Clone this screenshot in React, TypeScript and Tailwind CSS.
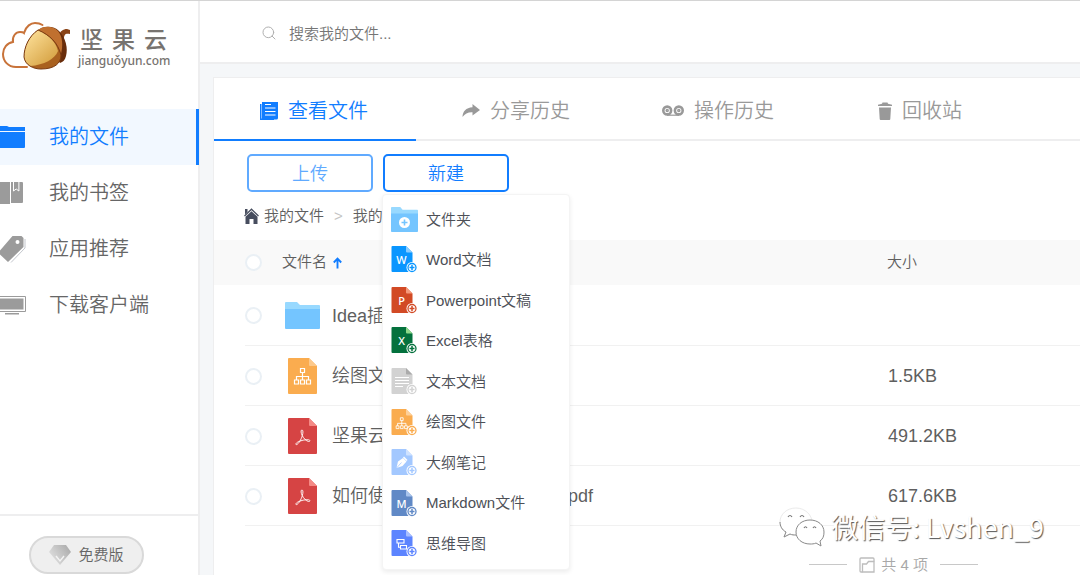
import type { ReactNode } from "react";
import { Search } from "lucide-react";

type IconProps = { className?: string };

function AcornLogo() {
  return (
    <svg className="h-12 w-[70px] shrink-0" viewBox="0 0 70 48" fill="none">
      <defs>
        <linearGradient id="nut" x1="26" y1="14" x2="52" y2="42" gradientUnits="userSpaceOnUse">
          <stop offset="0" stopColor="#fbdd95" />
          <stop offset="1" stopColor="#d6a243" />
        </linearGradient>
      </defs>
      <path
        d="M27 45H16C8 45 3 39 3 32c0-6 4-11 10-12-1-6 3-10 7-10 1 0 3 0 4 1C26 4 31 1 35 1c3 0 6 1 7.500 2"
        stroke="#c8733a"
        strokeWidth="2"
        strokeLinecap="round"
      />
      <path d="M59 14c1-5 4-7 8-7l3 1v4c-5-1-6 1-6 5z" fill="#8a4316" />
      <path d="M37 9c5-5 16-6 22 0 7 7 9 17 7 25-1 4-3 6-6 7z" fill="#692d0b" />
      <path d="M37 9c5-5 15-6 21 0 5 6 5 15 3 23C57 22 48 13 37 9z" fill="#c0702f" />
      <path d="M38 8c12 5 20 13 23 25 0 8-6 14-20 14-8 0-16-4-17-12 0-10 5-21 14-27z" fill="#a9611f" />
      <path d="M38 8c11 5 18 12 20 21-3 8-14 14-28 15-3-2-6-5-6-9 0-10 5-21 14-27z" fill="url(#nut)" />
      <path
        d="M38 8c12 5 20 13 23 25 0 8-6 14-20 14-8 0-16-4-17-12 0-10 5-21 14-27z"
        stroke="#7a3a12"
        strokeWidth="1"
      />
    </svg>
  );
}

function FolderNavIcon() {
  return (
    <svg className="h-6 w-[26px]" viewBox="0 0 26 24" fill="currentColor">
      <path d="M0 1h7l2 1h16v4H0zM0 7h25v15a1 1 0 0 1-1 1H0z" />
    </svg>
  );
}

function BookNavIcon() {
  return (
    <svg className="h-6 w-[26px]" viewBox="0 0 26 24" fill="currentColor">
      <path d="M0 1h10v22H0zM11 1h11a1 1 0 0 1 1 1v19a1 1 0 0 1-1 1H11z" />
      <path d="M13.500 1v9l2.700-2 2.700 2V1" fill="none" stroke="#fff" strokeWidth="1" />
    </svg>
  );
}

function TagNavIcon() {
  return (
    <svg className="h-7 w-[26px]" viewBox="0 0 26 28" fill="currentColor">
      <path
        fillRule="evenodd"
        d="M0 15.500 12.500 1h9L23.500 3v9L8 27l-8-7.500zM17.500 5a2 2 0 1 0 0 4 2 2 0 0 0 0-4z"
      />
      <path d="M25 4v9L11 27.500" fill="none" stroke="#c3c6cc" strokeWidth="1" />
    </svg>
  );
}

function MonitorNavIcon() {
  return (
    <svg className="h-5 w-[26px]" viewBox="0 0 26 20">
      <path d="M-1 1.500h26.500v15H-1z" fill="none" stroke="#9b9b9b" />
      <path d="M0 3.500h23.500v11H0zM5 18h14v1.500H5z" fill="#9b9b9b" />
    </svg>
  );
}

function ListTabIcon() {
  return (
    <svg className="h-[18px] w-[18px]" viewBox="0 0 18 18" fill="currentColor">
      <path d="M0 2h1.500v14.500H14V18H0z" />
      <path d="M2 0h16v16a1.500 1.500 0 0 1-1.500 1.500H2z" />
      <path d="M5 2.500h6M5 6h10.500M5 9.500h10.500M5 13h10.500" stroke="#fff" strokeWidth="1" />
    </svg>
  );
}

function ShareTabIcon() {
  return (
    <svg className="h-[18px] w-[18px]" viewBox="0 0 18 18" fill="currentColor">
      <path d="M10.500 2 18 8l-7.500 5.500v-3.300C6 10 3 11.500.5 15 .7 9.500 4 5.800 10.500 5.300z" />
    </svg>
  );
}

function TapeTabIcon() {
  return (
    <svg className="h-[18px] w-[22px]" viewBox="0 0 22 18" fill="none" stroke="currentColor">
      <circle cx="5.200" cy="8.500" r="3.900" strokeWidth="2.600" />
      <circle cx="16.800" cy="8.500" r="3.900" strokeWidth="2.600" />
      <circle cx="5.200" cy="8.500" r="1" strokeWidth="1.500" />
      <circle cx="16.800" cy="8.500" r="1" strokeWidth="1.500" />
      <path d="M5 13.200h12" strokeWidth="1.200" />
    </svg>
  );
}

function TrashTabIcon() {
  return (
    <svg className="h-[18px] w-[14px]" viewBox="0 0 14 18" fill="currentColor">
      <path d="M4.500.5h5l.5 1.300 4 1V4H0V2.800l4-1zM1 5.500h12L12.300 17a1 1 0 0 1-1 1H2.700a1 1 0 0 1-1-1z" />
    </svg>
  );
}

function HomeIcon() {
  return (
    <svg className="h-4 w-[15px]" viewBox="0 0 15 16" fill="#474d5e">
      <path d="M1 1h2.500v3L1 6.500z" />
      <path d="M.5 8 7.500 1.200 14.500 8" fill="none" stroke="#474d5e" strokeWidth="1.200" />
      <path d="m7.500 3.200 6 5.600V16H9.500v-5h-4v5h-4V8.800z" />
    </svg>
  );
}

function DiamondIcon() {
  return (
    <svg className="h-5 w-[22px]" viewBox="0 0 22 20">
      <defs>
        <linearGradient id="gem" x1="2" y1="14" x2="19" y2="3" gradientUnits="userSpaceOnUse">
          <stop offset="0" stopColor="#dedede" />
          <stop offset="1" stopColor="#b0b0b0" />
        </linearGradient>
      </defs>
      <path d="M5 0h12l5 7-11 13L0 7z" fill="url(#gem)" />
      <path d="m7 11 4 5 4-5" fill="none" stroke="#f4f4f4" strokeWidth="1.400" />
    </svg>
  );
}

function FolderIcon({ className }: IconProps) {
  return (
    <svg className={className} viewBox="0 0 35 27" preserveAspectRatio="none">
      <path d="M0 1a1 1 0 0 1 1-1h11l3 3h19a1 1 0 0 1 1 1v8H0z" fill="#98d9ff" />
      <path d="M0 7h35v19a1 1 0 0 1-1 1H1a1 1 0 0 1-1-1z" fill="#74c5ff" />
    </svg>
  );
}

function OrgChart() {
  return (
    <g fill="none" stroke="#fff" strokeWidth="1.200">
      <path d="M12.500 10.500h4v4h-4zM14.500 14.500v4M8.500 22v-3.500h12V22M14.500 18v4" />
      <path d="M6.500 22h4v4h-4zM12.500 22h4v4h-4zM18.500 22h4v4h-4z" />
    </g>
  );
}

function DiagramFileIcon() {
  return (
    <svg className="h-9 w-[29px]" viewBox="0 0 29 36">
      <path d="M0 1a1 1 0 0 1 1-1h20l8 8v27a1 1 0 0 1-1 1H1a1 1 0 0 1-1-1z" fill="#faac4f" />
      <path d="M21 0v7a1 1 0 0 0 1 1h7z" fill="#fdc98b" />
      <OrgChart />
    </svg>
  );
}

function PdfFileIcon() {
  return (
    <svg className="h-9 w-[29px]" viewBox="0 0 29 36">
      <path d="M0 1a1 1 0 0 1 1-1h20l8 8v27a1 1 0 0 1-1 1H1a1 1 0 0 1-1-1z" fill="#d64444" />
      <path d="M21 0v7a1 1 0 0 0 1 1h7z" fill="#f58a85" />
      <path
        d="M14 12c-1.500 0-1 3 .2 5.500 1.300 2.700 4 5.500 6.300 6 1.800.3 1.900-1.400.2-1.700-3-.5-8.300.7-11.200 2.400-2 1.200-2 2.600-1 2.400 2-.4 4.700-5.200 5.800-8.900.8-2.700 1-5.700-.3-5.700z"
        fill="none"
        stroke="#fff"
        strokeWidth=".9"
      />
    </svg>
  );
}

type NewFileIconProps = {
  color: string;
  fold: string;
  children: ReactNode;
};

function NewFileIcon({ color, fold, children }: NewFileIconProps) {
  return (
    <svg className="h-[27px] w-[27px]" viewBox="0 0 27 27">
      <path d="M.5 1a1 1 0 0 1 1-1H15l6.500 6.500V26h-20a1 1 0 0 1-1-1z" fill={color} />
      <path d="M15 0v5.500a1 1 0 0 0 1 1h5.500z" fill={fold} />
      {children}
      <circle cx="21" cy="21.500" r="5.500" fill="#fff" />
      <circle cx="21" cy="21.500" r="4" fill="#fff" stroke={color} strokeWidth="1.300" />
      <path d="M21 19v5M18.500 21.500h5" stroke={color} strokeWidth="1.500" />
    </svg>
  );
}

function Letter({ children }: { children: string }) {
  return (
    <text
      x="10.500"
      y="17.500"
      textAnchor="middle"
      fill="#fff"
      className="font-['Noto_Sans',sans-serif] text-[11px] font-medium"
    >
      {children}
    </text>
  );
}

const navItems = [
  { label: "我的文件", icon: <FolderNavIcon />, active: true },
  { label: "我的书签", icon: <BookNavIcon /> },
  { label: "应用推荐", icon: <TagNavIcon /> },
  { label: "下载客户端", icon: <MonitorNavIcon /> },
];

const tabs = [
  { label: "查看文件", icon: <ListTabIcon />, active: true },
  { label: "分享历史", icon: <ShareTabIcon /> },
  { label: "操作历史", icon: <TapeTabIcon /> },
  { label: "回收站", icon: <TrashTabIcon /> },
];

const files = [
  { name: "Idea插件", size: "", icon: <FolderIcon className="h-[27px] w-[35px]" /> },
  { name: "绘图文件", size: "1.5KB", icon: <DiagramFileIcon /> },
  { name: "坚果云介绍.pdf", size: "491.2KB", icon: <PdfFileIcon /> },
  { name: "如何使用坚果云同步文件夹 1.pdf", size: "617.6KB", icon: <PdfFileIcon /> },
];

const newItems = [
  {
    label: "文件夹",
    icon: (
      <span className="relative block">
        <FolderIcon className="h-[25px] w-[27px]" />
        <svg className="absolute top-[10px] left-2 size-[11px]" viewBox="0 0 11 11">
          <circle cx="5.500" cy="5.500" r="5.500" fill="#fff" />
          <path d="M5.500 2.500v6M2.500 5.500h6" stroke="#74c5ff" strokeWidth="1.600" />
        </svg>
      </span>
    ),
  },
  {
    label: "Word文档",
    icon: (
      <NewFileIcon color="#0a96ff" fold="#8acdff">
        <Letter>W</Letter>
      </NewFileIcon>
    ),
  },
  {
    label: "Powerpoint文稿",
    icon: (
      <NewFileIcon color="#d24a25" fold="#f59b7c">
        <Letter>P</Letter>
      </NewFileIcon>
    ),
  },
  {
    label: "Excel表格",
    icon: (
      <NewFileIcon color="#04713d" fold="#8fd98a">
        <Letter>X</Letter>
      </NewFileIcon>
    ),
  },
  {
    label: "文本文档",
    icon: (
      <NewFileIcon color="#d2d2d2" fold="#ababab">
        <path d="M4 9.500h14M4 12.500h14M4 15.500h14M4 18.500h8" stroke="#fff" strokeWidth="1" />
      </NewFileIcon>
    ),
  },
  {
    label: "绘图文件",
    icon: (
      <NewFileIcon color="#faac4f" fold="#fdd09a">
        <g transform="translate(.6 1.400) scale(.7)">
          <OrgChart />
        </g>
      </NewFileIcon>
    ),
  },
  {
    label: "大纲笔记",
    icon: (
      <NewFileIcon color="#a3c8ff" fold="#cfe2ff">
        <path d="m5.500 19 1.500-6.500 5-3.500 3.500 3.500-4 4.500z" fill="#fff" />
        <path d="m12.500 8 3.500 3.500" stroke="#fff" strokeWidth="1.500" />
        <path d="m5.500 19 5-5.500" stroke="#a3c8ff" strokeWidth=".8" />
      </NewFileIcon>
    ),
  },
  {
    label: "Markdown文件",
    icon: (
      <NewFileIcon color="#6089c6" fold="#a8c4ec">
        <Letter>M</Letter>
      </NewFileIcon>
    ),
  },
  {
    label: "思维导图",
    icon: (
      <NewFileIcon color="#5c84ff" fold="#a9bfff">
        <path
          d="M6 9.500h7v3.500H6zM9.500 15.500h6V19h-6zM7.500 13v4.300h2"
          fill="none"
          stroke="#fff"
          strokeWidth="1.100"
        />
      </NewFileIcon>
    ),
  },
];

function Sidebar() {
  return (
    <aside className="flex w-[200px] shrink-0 flex-col border-r-2 border-[#eeeeef] bg-white">
      <a href="#home" className="flex h-[108px] items-start gap-2 pt-[21px]">
        <AcornLogo />
        <span className="flex flex-col text-[#77736f]">
          <span className="flex gap-[9px] pl-[2px] text-[23px] leading-9 font-medium">
            <span>坚</span>
            <span>果</span>
            <span>云</span>
          </span>
          <span className="font-['Noto_Sans',sans-serif] text-xs leading-[6px] font-medium">
            jianguǒyun.com
          </span>
        </span>
      </a>

      <nav>
        {navItems.map((item) => (
          <a
            key={item.label}
            href="#nav"
            className={
              item.active
                ? "-mr-[1px] flex h-14 items-center gap-[23px] border-r-[3px] border-[#117dff] bg-[#f2f8ff] text-xl text-[#117dff]"
                : "flex h-14 items-center gap-[23px] text-xl text-[#666]"
            }
          >
            <span className={item.active ? "w-[26px]" : "w-[26px] text-[#9b9b9b]"}>
              {item.icon}
            </span>
            {item.label}
          </a>
        ))}
      </nav>

      <div className="mt-auto border-t-2 border-[#eeeeef] pt-5 pb-[2px] pl-[29px]">
        <button
          type="button"
          className="flex h-[38px] w-[115px] items-center justify-center gap-[7px] rounded-full border-2 border-[#d9d9d9] bg-[#efefef] text-[15px] text-[#666]"
        >
          <DiamondIcon />
          免费版
        </button>
      </div>
    </aside>
  );
}

function NewMenu() {
  return (
    <ul className="absolute top-10 left-[-1px] z-10 grid h-[376px] w-[188px] auto-rows-fr rounded-sm border border-[#f4f4f4] bg-white pt-1 pb-[5px] shadow-[0_2px_5px_rgba(0,0,0,0.08)]">
      {newItems.map((item) => (
        <li key={item.label}>
          <button
            type="button"
            className="flex h-full w-full items-center gap-2 px-2 text-left text-[15px] text-[#4c4f56]"
          >
            {item.icon}
            {item.label}
          </button>
        </li>
      ))}
    </ul>
  );
}

const checkboxClass =
  "block size-[17px] appearance-none rounded-full border-2 border-[#eaf0f5] bg-white";

function FileTable() {
  return (
    <table className="w-full table-fixed border-collapse text-left">
      <colgroup>
        <col className="w-[31px]" />
        <col className="w-[37px]" />
        <col />
        <col className="w-[193px]" />
      </colgroup>
      <thead>
        <tr className="h-[45px] bg-[#f9f9f9] text-[15px] text-[#5f5f5f]">
          <td />
          <td>
            <input type="checkbox" aria-label="全选" className={checkboxClass} />
          </td>
          <th className="font-[350]">
            <span className="flex items-center gap-[6px]">
              文件名
              <svg className="h-3 w-[9px]" viewBox="0 0 9 12">
                <path
                  d="M4.500 11.500V2M.8 5.500 4.500 1.700l3.700 3.800"
                  fill="none"
                  stroke="#117dff"
                  strokeWidth="1.900"
                />
              </svg>
            </span>
          </th>
          <th className="font-[350]">大小</th>
        </tr>
      </thead>
      <tbody>
        {files.map((file) => (
          <tr key={file.name} className="h-[60px] text-lg text-[#5f5f5f]">
            <td />
            <td className="border-b border-[#f1f1f1] pt-[2px]">
              <input type="checkbox" aria-label={file.name} className={checkboxClass} />
            </td>
            <td className="border-b border-[#f1f1f1] pt-[2px]">
              <span className="flex items-center gap-[9px] whitespace-nowrap">
                <span className="flex w-[41px] justify-center">{file.icon}</span>
                {file.name}
              </span>
            </td>
            <td className="border-b border-[#f1f1f1] pt-[2px] pl-[1px]">{file.size}</td>
          </tr>
        ))}
      </tbody>
    </table>
  );
}

function TotalCount() {
  return (
    <div className="flex items-center justify-end gap-3 pt-7 pr-[102px] text-[15px] text-[#a8a8a8]">
      <span className="h-[1px] w-[38px] bg-[#c8c8c8]" />
      <span className="flex items-center gap-[6px]">
        <svg className="size-4" viewBox="0 0 16 16" fill="none" stroke="#bdbdbd" strokeWidth="1.300">
          <path d="M15 4.500V2a1 1 0 0 0-1-1H2a1 1 0 0 0-1 1v12a1 1 0 0 0 1 1h1.500" />
          <path d="M3.500 15V7h4l2-2.500H15V15z" />
        </svg>
        共 4 项
      </span>
      <span className="h-[1px] w-[38px] bg-[#c8c8c8]" />
    </div>
  );
}

function Watermark() {
  return (
    <div className="pointer-events-none absolute right-9 bottom-[29px] flex items-center gap-[6px]">
      <svg className="h-10 w-[46px]" viewBox="0 0 46 40" fill="#fff">
        <path
          d="M17 1C8 1 1 7 1 15c0 4 2 8 6 10l-2 5 6-3c2 1 4 1 6 1 9 0 16-6 16-13S26 1 17 1z"
          stroke="#e4e4e4"
          strokeWidth=".8"
        />
        <path d="M1 15c0 4 2 8 6 10l-2 5 6-3c2 1 4 1 6 1" fill="none" stroke="#8a8a8a" strokeWidth="1" />
        <path
          d="M31 13c-8 0-14 5-14 12s6 12 14 12c2 0 4 0 6-1l5 3-1-5c3-2 4-5 4-9 0-7-6-12-14-12z"
          stroke="#8a8a8a"
          strokeWidth="1"
        />
        <path
          d="M9 10q2-3 4 0M21 10q2-3 4 0M25 21q1.500-2.500 3 0M34 21q1.500-2.500 3 0"
          fill="none"
          stroke="#777"
          strokeWidth="1.200"
        />
      </svg>
      <span className="font-['Noto_Sans_CJK_SC',sans-serif] text-[27px] leading-10 font-normal text-white [text-shadow:1px_1px_1px_#555]">
        微信号: Lvshen_9
      </span>
    </div>
  );
}

export default function App() {
  return (
    <div className="relative flex min-h-screen overflow-hidden border-t border-[#d4d4d4] bg-[#f5f7f9] font-['Liberation_Sans','Noto_Sans_CJK_SC',sans-serif] font-[350]">
      <Sidebar />

      <div className="flex min-w-0 flex-1 flex-col">
        <header className="flex h-[63px] items-center gap-3 border-b-2 border-[#eeeeef] bg-white pt-[2px] pl-[61px]">
          <Search className="size-4 text-[#b0b0b0]" strokeWidth={1.5} />
          <input
            type="search"
            aria-label="搜索我的文件"
            placeholder="搜索我的文件..."
            className="min-w-0 flex-1 pt-1 text-[15px] placeholder:text-[#757575] focus:outline-none"
          />
        </header>

        <main className="mt-[13px] ml-[13px] flex-1 border-t border-l border-[#eeeeef] bg-white">
          <nav className="flex border-b-2 border-[#eeeeef]">
            {tabs.map((tab) => (
              <a
                key={tab.label}
                href="#tab"
                className={
                  tab.active
                    ? "-mb-[2px] flex h-[63px] w-[202px] items-center justify-center gap-[10px] border-b-2 border-[#117dff] pt-1 pr-[2px] text-xl text-[#117dff]"
                    : "flex h-[61px] w-[202px] items-center justify-center gap-[10px] pt-1 pr-[2px] text-xl text-[#999]"
                }
              >
                {tab.icon}
                {tab.label}
              </a>
            ))}
          </nav>

          <div className="flex gap-[10px] pt-[13px] pl-[33px] text-lg">
            <button
              type="button"
              className="h-[38px] w-[126px] rounded-[5px] border-2 border-[#60aaff] pt-[2px] text-[#60aaff]"
            >
              上传
            </button>
            <div className="relative">
              <button
                type="button"
                className="h-[38px] w-[126px] rounded-[5px] border-2 border-[#117dff] pt-[2px] text-[#117dff]"
              >
                新建
              </button>
              <NewMenu />
            </div>
          </div>

          <div className="flex h-12 items-center gap-[10px] pl-[30px] text-[15px] text-[#5f5f5f]">
            <a href="#files" className="flex items-center gap-[5px]">
              <HomeIcon />
              我的文件
            </a>
            <span className="text-[#c4c4c4]">&gt;</span>
            <a href="#current">我的坚果云</a>
          </div>

          <FileTable />
          <TotalCount />
        </main>
      </div>

      <Watermark />
    </div>
  );
}
